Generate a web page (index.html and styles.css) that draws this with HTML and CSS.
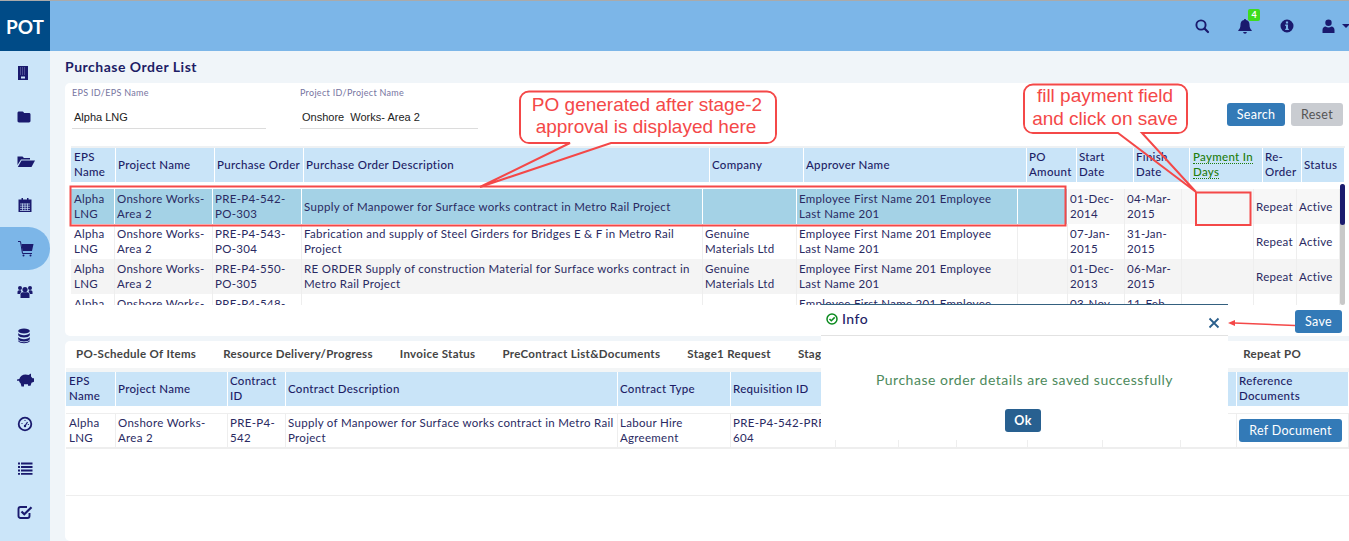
FILE: index.html
```html
<!DOCTYPE html>
<html lang="en">
<head>
    <meta charset="UTF-8">
    <meta name="viewport" content="width=device-width, initial-scale=1.0">
    <title>Purchase Order List</title>
    <link rel="stylesheet" href="styles.css">
</head>
<body>
<div class="app">
    <div class="logo">POT</div>
    <header class="topbar">
        <span class="top-icon search-icon">
            <svg width="16" height="16" viewBox="0 0 16 16"><circle cx="7" cy="7" r="4.6" fill="none" stroke="#1a1a6e" stroke-width="1.9"/><path d="M10.5 10.5L14 14" stroke="#1a1a6e" stroke-width="2.2" stroke-linecap="round"/></svg>
        </span>
        <span class="top-icon">
            <svg width="14" height="16" viewBox="0 0 14 16"><path d="M7 1c.6 0 1 .4 1 1 2.300.5 3.500 2.300 3.500 4.500 0 3 .8 4.300 2.200 5.800v.7H.3v-.7C1.700 10.800 2.500 9.500 2.500 6.500 2.500 4.300 3.700 2.500 6 2c0-.6.400-1 1-1zM5.200 14h3.600c0 1-.8 1.700-1.800 1.700S5.200 15 5.200 14z" fill="#1a1a6e"/></svg>
            <span class="badge">4</span>
        </span>
        <span class="top-icon">
            <svg width="14" height="14" viewBox="0 0 14 14"><path fill-rule="evenodd" d="M7 .5a6.500 6.500 0 1 1 0 13 6.500 6.500 0 0 1 0-13zM5.900 2.600v1.900h2.200V2.600zM5.200 5.600v1.300h.8v2.800h-.8V11h3.600V9.700H8V5.600z" fill="#1a1a6e"/></svg>
        </span>
        <span class="top-icon user-icon">
            <svg width="13" height="14" viewBox="0 0 13 14"><circle cx="6.500" cy="3.800" r="3.200" fill="#1a1a6e"/><path d="M.5 14v-3c0-2.200 1.500-3.500 3-3.500 1 .8 2 1.100 3 1.100s2-.3 3-1.100c1.500 0 3 1.300 3 3.500v3z" fill="#1a1a6e"/></svg>
            <span class="caret"></span>
        </span>
    </header>

    <nav class="sidebar">
        <a class="nav-item">
            <svg width="16" height="16" viewBox="0 0 16 16"><rect x="1" y="1" width="10" height="14" fill="#1a1a6e"/><path d="M3 3h6M3 5h6M3 7h6M3 9h6" stroke="#8d8cc0" stroke-width=".9" stroke-dasharray="1 1"/><rect x="4" y="11.500" width="4" height="2" fill="#cbe5f9"/></svg>
        </a>
        <a class="nav-item">
            <svg width="16" height="16" viewBox="0 0 16 16"><path d="M2 2.500h3.500c.5 0 .8.200 1 .6l.5.9h5c.8 0 1.500.6 1.500 1.400v6.700c0 .8-.7 1.400-1.500 1.400H2c-.8 0-1.500-.6-1.500-1.400V3.900C.5 3.100 1.200 2.500 2 2.500z" fill="#1a1a6e"/></svg>
        </a>
        <a class="nav-item">
            <svg width="18" height="16" viewBox="0 0 18 16"><path d="M.5 12V3.500h5l1.500 1.500h6V6.500H4z" fill="#1a1a6e"/><path d="M4.500 7.500H18L14.500 14H.8z" fill="#1a1a6e"/></svg>
        </a>
        <a class="nav-item">
            <svg width="16" height="16" viewBox="0 0 16 16"><path d="M1.500 2.500h3V1h1.500v1.500h4V1h1.500v1.500h3V15h-13z" fill="#1a1a6e"/><path d="M3 7h10M3 9.200h10M3 11.400h10M3 13.500h10M5.500 6.500v7M8 6.500v7M10.500 6.500v7" stroke="#cbe5f9" stroke-width=".7"/></svg>
        </a>
        <a class="nav-item active">
            <svg width="18" height="18" viewBox="0 0 18 18"><path d="M1 1.500h2.500l2 12H15" fill="none" stroke="#1a1a6e" stroke-width="1"/><path d="M4.500 4H16.500l-1.500 7H5.500z" fill="#1a1a6e"/><circle cx="6.500" cy="15.500" r="1" fill="#1a1a6e"/><circle cx="13.500" cy="15.500" r="1" fill="#1a1a6e"/></svg>
        </a>
        <a class="nav-item">
            <svg width="16" height="16" viewBox="0 0 16 16"><g fill="#1a1a6e"><circle cx="3" cy="4" r="2"/><circle cx="13" cy="4" r="2"/><circle cx="8" cy="5.500" r="2.600"/><path d="M.5 10V8c0-1 .8-1.700 1.700-1.700h1.600l.6 1L3 10zM15.500 10V8c0-1-.8-1.700-1.700-1.700h-1.600l-.6 1 1.400 2.700z"/><path d="M3.500 14v-3.500c0-1.500 1.100-2.300 2.200-2.300h4.600c1.100 0 2.200.8 2.200 2.300V14z"/></g></svg>
        </a>
        <a class="nav-item">
            <svg width="14" height="16" viewBox="0 0 14 16"><g fill="#1a1a6e"><ellipse cx="7" cy="3" rx="5.800" ry="2.500"/><path d="M1.200 5c.8 1.400 3.200 2.200 5.800 2.200S12 6.400 12.800 5v2.300C12 8.800 9.600 9.500 7 9.500s-5-.7-5.800-2.200z"/><path d="M1.200 9c.8 1.400 3.200 2.200 5.800 2.200s5-.8 5.800-2.200v2.300c-.8 1.500-3.200 2.200-5.800 2.200s-5-.7-5.800-2.200z"/><path d="M1.200 12.300c.8 1.200 3.200 1.900 5.800 1.900s5-.7 5.800-1.900v1c-.8 1.300-3.200 2-5.800 2s-5-.7-5.800-2z"/></g></svg>
        </a>
        <a class="nav-item">
            <svg width="18" height="16" viewBox="0 0 18 16"><path d="M0 7.500l2.300-.5C3 4.500 5.500 2.500 8.500 2.500c1.200 0 2.200.2 3 .6L14 1.500v3l1.500 1.800H17v3.500l-2.500 1-1 3H11v-1.500H7V14.500H4.500l-.8-3C2.800 10.700 2.200 9.700 2 8.700L0 8.800z" fill="#1a1a6e"/></svg>
        </a>
        <a class="nav-item">
            <svg width="16" height="16" viewBox="0 0 16 16"><circle cx="8" cy="8" r="6.300" fill="none" stroke="#1a1a6e" stroke-width="1.800"/><path d="M8 10l2.500-4" stroke="#1a1a6e" stroke-width="1.200"/><circle cx="8" cy="10" r="1.200" fill="#1a1a6e"/><path d="M4.500 7.500h1M10.800 8.500h1M7.500 4.500h1" stroke="#1a1a6e" stroke-width="1"/></svg>
        </a>
        <a class="nav-item">
            <svg width="16" height="16" viewBox="0 0 16 16"><path d="M1 2.500h2v2H1zM4 2.500h11.500v2H4zM1 6h2v2H1zM4 6h11.500v2H4zM1 9.500h2v2H1zM4 9.500h11.500v2H4zM1 13h2v1.800H1zM4 13h11.500v1.800H4z" fill="#1a1a6e"/></svg>
        </a>
        <a class="nav-item">
            <svg width="16" height="16" viewBox="0 0 16 16"><path d="M12.500 9v3c0 1.100-.9 2-2 2H3.500c-1.100 0-2-.9-2-2V5c0-1.100.9-2 2-2H10" fill="none" stroke="#1a1a6e" stroke-width="1.900"/><path d="M4.500 7.500L7.300 10.300 14.500 3.200" fill="none" stroke="#1a1a6e" stroke-width="2.200"/></svg>
        </a>
    </nav>

    <main class="content">
        <h1 class="page-title">Purchase Order List</h1>

        <section class="panel panel-top">
            <div class="filters">
                <div class="field field-eps">
                    <label>EPS ID/EPS Name</label>
                    <div class="field-value">Alpha LNG</div>
                </div>
                <div class="field field-project">
                    <label>Project ID/Project Name</label>
                    <div class="field-value">Onshore&nbsp; Works- Area 2</div>
                </div>
                <div class="filter-btns">
                    <button class="btn btn-search">Search</button>
                    <button class="btn btn-grey">Reset</button>
                </div>
            </div>

            <div class="head-wrap">
                <table class="grid po-head">
                    <colgroup>
                        <col class="w45"><col class="w99"><col class="w89"><col class="w406"><col class="w94"><col class="w223"><col class="w50"><col class="w57"><col class="w56"><col class="w73"><col class="w39"><col class="w43">
                    </colgroup>
                    <tr>
                        <th>EPS Name</th>
                        <th>Project Name</th>
                        <th>Purchase Order</th>
                        <th>Purchase Order Description</th>
                        <th>Company</th>
                        <th>Approver Name</th>
                        <th>PO Amount</th>
                        <th>Start Date</th>
                        <th>Finish Date</th>
                        <th class="req-cell"><span class="req-label">Payment In Days</span></th>
                        <th>Re-Order</th>
                        <th>Status</th>
                    </tr>
                </table>
            </div>

            <div class="body-wrap">
                <table class="grid po-body">
                    <colgroup>
                        <col class="w44"><col class="w98"><col class="w89"><col class="w401"><col class="w94"><col class="w221"><col class="w50"><col class="w57"><col class="w57"><col class="w72"><col class="w43"><col class="w43">
                    </colgroup>
                    <tr class="selected">
                        <td class="hl">Alpha LNG</td>
                        <td class="hl">Onshore Works-Area 2</td>
                        <td class="hl">PRE-P4-542-PO-303</td>
                        <td class="hl">Supply of Manpower for Surface works contract in Metro Rail Project</td>
                        <td class="hl"></td>
                        <td class="hl">Employee First Name 201 Employee Last Name 201</td>
                        <td class="hl"></td>
                        <td>01-Dec-2014</td>
                        <td>04-Mar-2015</td>
                        <td></td>
                        <td>Repeat</td>
                        <td>Active</td>
                    </tr>
                    <tr>
                        <td>Alpha LNG</td>
                        <td>Onshore Works-Area 2</td>
                        <td>PRE-P4-543-PO-304</td>
                        <td>Fabrication and supply of Steel Girders for Bridges E &amp; F in Metro Rail Project</td>
                        <td>Genuine Materials Ltd</td>
                        <td>Employee First Name 201 Employee Last Name 201</td>
                        <td></td>
                        <td>07-Jan-2015</td>
                        <td>31-Jan-2015</td>
                        <td></td>
                        <td>Repeat</td>
                        <td>Active</td>
                    </tr>
                    <tr class="odd">
                        <td>Alpha LNG</td>
                        <td>Onshore Works-Area 2</td>
                        <td>PRE-P4-550-PO-305</td>
                        <td>RE ORDER Supply of construction Material for Surface works contract in Metro Rail Project</td>
                        <td>Genuine Materials Ltd</td>
                        <td>Employee First Name 201 Employee Last Name 201</td>
                        <td></td>
                        <td>01-Dec-2013</td>
                        <td>06-Mar-2015</td>
                        <td></td>
                        <td>Repeat</td>
                        <td>Active</td>
                    </tr>
                    <tr>
                        <td>Alpha LNG</td>
                        <td>Onshore Works-Area 2</td>
                        <td>PRE-P4-548-PO-306</td>
                        <td></td>
                        <td></td>
                        <td>Employee First Name 201 Employee Last Name 201</td>
                        <td></td>
                        <td>03-Nov-2014</td>
                        <td>11-Feb-2015</td>
                        <td></td>
                        <td></td>
                        <td></td>
                    </tr>
                </table>
                <div class="vbar"><div class="vbar-thumb"></div></div>
            </div>

            <div class="save-row">
                <button class="btn btn-save">Save</button>
            </div>
        </section>

        <section class="panel panel-bottom">
            <div class="tabs">
                <span>PO-Schedule Of Items</span>
                <span>Resource Delivery/Progress</span>
                <span>Invoice Status</span>
                <span>PreContract List&amp;Documents</span>
                <span>Stage1 Request</span>
                <span>Stage2 Request</span>
                <span class="tab-last">Repeat PO</span>
            </div>
            <div class="head-wrap head-wrap-2">
                <table class="grid contract-table">
                    <colgroup>
                        <col class="w50"><col class="w112"><col class="w58"><col class="w332"><col class="w113"><col class="w105"><col class="w63"><col class="w58"><col class="w71"><col class="w75"><col class="w78"><col class="w56"><col class="w112">
                    </colgroup>
                    <tr>
                        <th>EPS Name</th>
                        <th>Project Name</th>
                        <th>Contract ID</th>
                        <th>Contract Description</th>
                        <th>Contract Type</th>
                        <th>Requisition ID</th>
                        <th></th><th></th><th></th><th></th><th></th><th></th>
                        <th>Reference Documents</th>
                    </tr>
                </table>
            </div>
            <table class="grid contract-table contract-body">
                <colgroup>
                    <col class="w50"><col class="w112"><col class="w58"><col class="w332"><col class="w113"><col class="w105"><col class="w63"><col class="w58"><col class="w71"><col class="w75"><col class="w78"><col class="w56"><col class="w112">
                </colgroup>
                <tr>
                    <td>Alpha LNG</td>
                    <td>Onshore Works-Area 2</td>
                    <td>PRE-P4-542</td>
                    <td>Supply of Manpower for Surface works contract in Metro Rail Project</td>
                    <td>Labour Hire Agreement</td>
                    <td>PRE-P4-542-PRF-604</td>
                    <td></td><td></td><td></td><td></td><td></td><td></td>
                    <td class="ref-cell"><button class="btn btn-ref">Ref Document</button></td>
                </tr>
            </table>
            <div class="empty-row"></div>
        </section>
    </main>
</div>

<!-- success dialog, sits over both panels -->
<div class="modal">
    <div class="modal-head">
        <svg width="12" height="12" viewBox="0 0 12 12"><circle cx="6" cy="6" r="5" fill="none" stroke="#0a8a1e" stroke-width="1.500"/><path d="M3.500 6l1.800 1.800L8.700 4.400" fill="none" stroke="#0a8a1e" stroke-width="1.500"/></svg>
        <span class="modal-title">Info</span>
        <svg class="modal-close" width="12" height="12" viewBox="0 0 12 12"><path d="M1.500 1.500l9 9M10.500 1.500l-9 9" stroke="#2b5f8c" stroke-width="1.800"/></svg>
    </div>
    <div class="modal-body">
        <p class="modal-msg">Purchase order details are saved successfully</p>
        <button class="btn btn-ok">Ok</button>
    </div>
</div>

<!-- red tutorial annotations drawn on top of the screenshot -->
<svg class="notes" width="1349" height="541" viewBox="0 0 1349 541">
    <g fill="none" stroke="#f44848" stroke-width="2">
        <rect x="70.500" y="186.500" width="995" height="39"/>
        <rect x="1196" y="192.500" width="54.500" height="32.500"/>
    </g>
    <path class="note-box" d="M529 91.500H767a9 9 0 0 1 9 9V134a9 9 0 0 1-9 9H611L480 187 570 143H529a9 9 0 0 1-9-9V100.500a9 9 0 0 1 9-9z"/>
    <rect x="521" y="93" width="254" height="49" rx="8" fill="#fff"/>
    <path class="note-box" d="M1033 84.500H1178a9 9 0 0 1 9 9V124a9 9 0 0 1-9 9H1142L1196 192 1118 133H1033a9 9 0 0 1-9-9V93.500a9 9 0 0 1 9-9z"/>
    <rect x="1025" y="86" width="161" height="46" rx="8" fill="#fff"/>
    <text class="note-text" x="647" y="111">PO generated after stage-2</text>
    <text class="note-text" x="646" y="133">approval is displayed here</text>
    <text class="note-text" x="1105" y="102">fill payment field</text>
    <text class="note-text" x="1105" y="125">and click on save</text>
    <path d="M1295 325.500L1234 323" stroke="#f44848" stroke-width="1.500" fill="none"/>
    <path d="M1228 323l7-3v6z" fill="#f44848"/>
</svg>
</body>
</html>
```

FILE: styles.css
```css
* {
    box-sizing: border-box;
}

body {
    margin: 0;
    font-family: Lato, "Open Sans", sans-serif;
    font-size: 12px;
    color: #2a2a62;
    overflow: hidden;
    background-color: #fff;
}

svg {
    flex-shrink: 0;
}

.app {
    display: grid;
    grid-template-columns: 50px 1fr;
    grid-template-rows: 50px 1fr;
    height: 541px;
    border-top: 1px solid #aaaaaa;
    overflow: hidden;
}

.logo {
    background-color: #004b87;
    color: #fff;
    font-size: 19px;
    font-weight: 700;
    display: flex;
    align-items: center;
    justify-content: center;
    height: 50px;
}

.topbar {
    background-color: #7cb6e8;
    height: 50px;
    display: flex;
    align-items: center;
    justify-content: flex-end;
    gap: 28px;
}

.top-icon {
    position: relative;
    display: flex;
    align-items: center;
    width: 14px;
}

.search-icon {
    margin-right: 2px;
}

.user-icon {
    width: 29px;
    margin-right: -2px;
    gap: 7px;
}

.caret {
    border-left: 4px solid transparent;
    border-right: 4px solid transparent;
    border-top: 4px solid #1a1a6e;
    flex-shrink: 0;
}

.badge {
    position: absolute;
    left: 10px;
    top: -9px;
    width: 12px;
    height: 12px;
    border-radius: 2px;
    background-color: #3fdc1c;
    color: #fff;
    font-size: 9px;
    font-weight: 700;
    line-height: 12px;
    text-align: center;
}

.sidebar {
    background-color: #cbe5f9;
    display: flex;
    flex-direction: column;
}

.nav-item {
    height: 43.9px;
    display: flex;
    align-items: center;
    padding-left: 17px;
    flex-shrink: 0;
}

.nav-item.active {
    background-color: #7cb6e8;
    border-radius: 0 22px 22px 0;
}

.content {
    background-color: #f0f5f9;
    padding-left: 15px;
    min-width: 0;
    overflow: hidden;
}

.page-title {
    margin: 0;
    height: 32px;
    padding-top: 7px;
    font-size: 14px;
    line-height: 17px;
    font-weight: 700;
    letter-spacing: 0.5px;
    color: #1d1d66;
}

.panel {
    background-color: #fff;
    border-radius: 5px 0 0 5px;
}

.panel-top {
    height: 253px;
}

.panel-bottom {
    margin-top: 5px;
    height: 200px;
}

.filters {
    display: flex;
    height: 63px;
    padding: 5px 6px 0 7px;
}

.field label {
    display: block;
    font-size: 9px;
    line-height: 10px;
    letter-spacing: 0.3px;
    color: #77759f;
}

.field-value {
    margin-top: 8px;
    height: 23px;
    padding: 4px 2px 0;
    border-bottom: 1px solid #dcdcdc;
    font-family: "Liberation Sans", sans-serif;
    font-size: 11px;
    line-height: 14px;
    color: #222;
}

.field-eps {
    width: 194px;
}

.field-project {
    width: 178px;
    margin-left: 34px;
}

.filter-btns {
    margin-left: auto;
    margin-top: 15px;
    display: flex;
    gap: 6px;
    align-items: flex-start;
}

.btn {
    background-color: #337ab7;
    color: #fff;
    border: none;
    border-radius: 3px;
    height: 23px;
    padding: 0;
    font-family: Lato, sans-serif;
    font-size: 12.500px;
    letter-spacing: 0.3px;
}

.btn-search {
    width: 58px;
}

.btn-grey {
    width: 52px;
    background-color: #c9ccd1;
    color: #555;
}

.btn-save {
    width: 47px;
}

.head-wrap {
    margin-left: 6px;
    padding-top: 2px;
    background-color: #eef1f3;
    width: 1274px;
}

.grid {
    table-layout: fixed;
    border-collapse: separate;
    border-spacing: 0;
    font-size: 11.500px;
    line-height: 15px;
    letter-spacing: 0.3px;
}

.grid th {
    background-color: #c9e4f8;
    color: #1d1d66;
    font-weight: 500;
    text-align: left;
    height: 34px;
    padding: 0 2px 2px 2px;
    border-right: 1px solid #fff;
    overflow: hidden;
}

.grid td {
    height: 35px;
    padding: 0 2px 1px 2px;
    border-right: 1px solid #eeeeee;
    overflow: hidden;
}

.grid th:first-child,
.grid td:first-child {
    padding-left: 3px;
}

.po-head {
    width: 1274px;
}

.grid .req-cell {
    padding-left: 3px;
}

.req-label {
    color: #1e7d0e;
    border-bottom: 1px dotted #1e7d0e;
}

.body-wrap {
    margin-left: 6px;
    margin-top: 2px;
    padding-top: 5px;
    height: 121px;
    width: 1274px;
    display: flex;
    overflow: hidden;
}

.po-body {
    width: 1269px;
    flex-shrink: 0;
    align-self: flex-start;
}

.po-body .selected td {
    background-color: #f7f7f7;
}

.po-body .selected td.hl {
    background-color: #a4d2e6;
    border-right-color: #fff;
}

.po-body .odd td {
    background-color: #f4f4f4;
}

.vbar {
    width: 5px;
    margin-top: -5px;
    background-color: #c8c8c8;
    border-radius: 3px;
    flex-shrink: 0;
}

.vbar-thumb {
    height: 41px;
    background-color: #1a1a6e;
    border-radius: 3px;
}

.save-row {
    display: flex;
    justify-content: flex-end;
    margin-top: 5px;
    padding-right: 7px;
}

.tabs {
    display: flex;
    gap: 27px;
    height: 27px;
    align-items: center;
    padding-left: 11px;
    padding-bottom: 2px;
    font-weight: 700;
    font-size: 11.500px;
    letter-spacing: 0.3px;
    color: #444;
}

.tab-last {
    margin-left: auto;
    margin-right: 48px;
}

.head-wrap-2 {
    margin-left: 1px;
    width: 1283px;
    padding-top: 4px;
    background-color: #f3f5f6;
}

.contract-table {
    width: 1283px;
}

.contract-body {
    margin-left: 1px;
    margin-top: 7px;
    border-top: 1px solid #eeeeee;
    border-bottom: 2px solid #eeeeee;
}

.contract-body td {
    height: 33px;
}

.ref-cell {
    padding-left: 3px;
}

.btn-ref {
    width: 103px;
    margin-top: 1px;
}

.empty-row {
    margin-left: 1px;
    height: 47px;
    border-bottom: 1px solid #eeeeee;
}

.w39 { width: 39px; }
.w43 { width: 43px; }
.w44 { width: 44px; }
.w45 { width: 45px; }
.w50 { width: 50px; }
.w56 { width: 56px; }
.w57 { width: 57px; }
.w58 { width: 58px; }
.w63 { width: 63px; }
.w71 { width: 71px; }
.w72 { width: 72px; }
.w73 { width: 73px; }
.w75 { width: 75px; }
.w78 { width: 78px; }
.w89 { width: 89px; }
.w94 { width: 94px; }
.w98 { width: 98px; }
.w99 { width: 99px; }
.w105 { width: 105px; }
.w112 { width: 112px; }
.w113 { width: 113px; }
.w221 { width: 221px; }
.w223 { width: 223px; }
.w332 { width: 332px; }
.w401 { width: 401px; }
.w406 { width: 406px; }

.modal {
    position: absolute;
    left: 821px;
    top: 304px;
    width: 407px;
    height: 136px;
    background-color: #fff;
    border-top: 1px solid #34607f;
}

.modal-head {
    height: 31px;
    display: flex;
    align-items: center;
    padding: 0 8px 3px 5px;
    gap: 4px;
    border-bottom: 1px solid #e2e2e2;
}

.modal-title {
    font-size: 14px;
    font-weight: 500;
    letter-spacing: 0.5px;
    color: #1d1d66;
}

.modal-close {
    margin-left: auto;
    margin-top: 8px;
}

.modal-body {
    text-align: center;
}

.modal-msg {
    margin: 35px 0 0;
    font-size: 14px;
    line-height: 17px;
    letter-spacing: 0.52px;
    color: #4d8a5c;
}

.btn-ok {
    display: block;
    margin: 21px 0 0 184px;
    width: 36px;
    background-color: #286090;
    font-weight: 700;
}

.notes {
    position: absolute;
    left: 0;
    top: 0;
    pointer-events: none;
}

.note-box {
    fill: none;
    stroke: #f44848;
    stroke-width: 2;
}

.note-text {
    font-family: "Liberation Sans", Arial, sans-serif;
    font-size: 19px;
    fill: #f44848;
    text-anchor: middle;
}
```
